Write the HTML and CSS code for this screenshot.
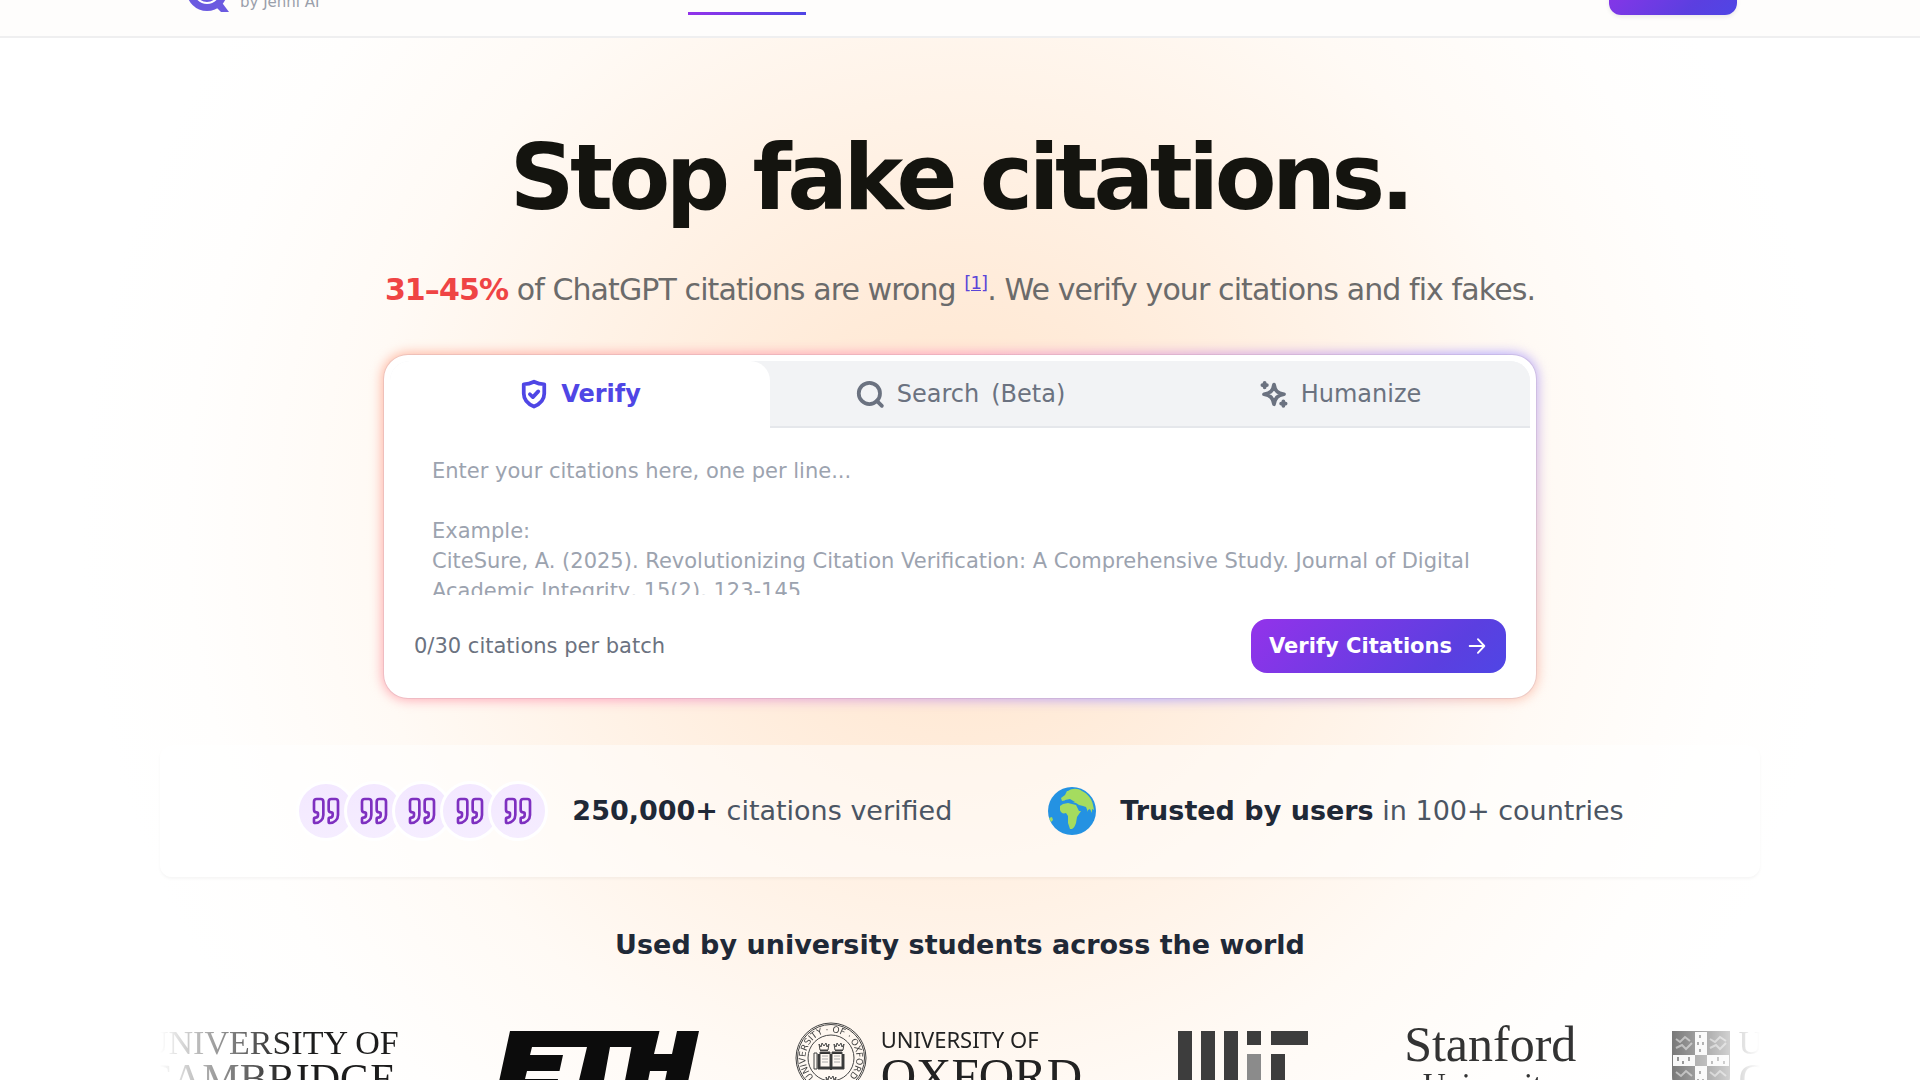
FILE: index.html
```html
<!DOCTYPE html>
<html lang="en">
<head>
<meta charset="utf-8">
<meta name="viewport" content="width=device-width, initial-scale=1">
<title>CiteSure</title>
<link rel="stylesheet" href="styles.css">
</head>
<body>
<svg class="defs" aria-hidden="true">
  <symbol id="quote" viewBox="0 0 24 24"><path d="M16 3a2 2 0 0 0-2 2v6a2 2 0 0 0 2 2 1 1 0 0 1 1 1v1a2 2 0 0 1-2 2 1 1 0 0 0-1 1v2a1 1 0 0 0 1 1 6 6 0 0 0 6-6V5a2 2 0 0 0-2-2z"/><path d="M5 3a2 2 0 0 0-2 2v6a2 2 0 0 0 2 2 1 1 0 0 1 1 1v1a2 2 0 0 1-2 2 1 1 0 0 0-1 1v2a1 1 0 0 0 1 1 6 6 0 0 0 6-6V5a2 2 0 0 0-2-2z"/></symbol>
  <symbol id="crown" viewBox="0 0 12 10"><path d="M2 9 1 3l2 3 1-4 2 3 2-3 1 4 2-3-1 6zM2 9.500h8"/></symbol>
</svg>

<header class="header">
  <div class="header-inner">
    <a class="brand" href="#">
      <svg class="brand-mark" viewBox="0 0 42 44" aria-hidden="true"><circle cx="20" cy="22.500" r="20.500" fill="#6b5ae0"/><path d="M33 32l9 12h-8l-8-8z" fill="#6b5ae0"/><circle cx="20" cy="22.500" r="12.500" fill="none" stroke="#fff" stroke-width="2"/></svg>
      <span>by Jenni AI</span>
    </a>
    <a class="nav-active" href="#" aria-label="Verify"></a>
    <button class="header-cta" type="button" aria-label="Sign up"></button>
  </div>
</header>

<main class="page">
  <section class="hero">
    <h1>Stop fake citations.</h1>
    <p class="lead"><strong>31–45%</strong> of ChatGPT citations are wrong <sup><a href="#">[1]</a></sup>. We verify your citations and fix fakes.</p>

    <div class="card">
      <div class="tabs">
        <button class="tab tab-active" type="button">
          <svg class="icon" viewBox="0 0 24 24" aria-hidden="true"><path d="M12 2.200c2.700 1.300 5.300 1.900 8.200 2v7.300c0 5-3.200 8.300-8.200 10.500-5-2.200-8.200-5.500-8.200-10.500V4.200c2.900-.1 5.500-.7 8.200-2z"/><path d="m8.700 12.200 2.400 2.300 4.300-4.600"/></svg>
          Verify
        </button>
        <button class="tab" type="button">
          <svg class="icon" viewBox="0 0 24 24" aria-hidden="true"><circle cx="11.500" cy="11.500" r="8.500"/><path d="m17.500 17.500 4 4"/></svg>
          Search <span>(Beta)</span>
        </button>
        <button class="tab" type="button">
          <svg class="icon" viewBox="0 0 24 24" aria-hidden="true"><path d="M12 4.500c.8 4.900 2.600 6.700 8 7.700-5.400 1-7.200 3-8 8-.8-5-2.600-7-8-8 5.400-1 7.200-2.800 8-7.700z"/><path d="M4.500 3v3.600M2.700 4.800h3.600M19.500 17.800v3.600M17.700 19.600h3.600"/></svg>
          Humanize
        </button>
      </div>
      <textarea class="entry" aria-label="Citations" placeholder="Enter your citations here, one per line...&#10;&#10;Example:&#10;CiteSure, A. (2025). Revolutionizing Citation Verification: A Comprehensive Study. Journal of Digital Academic Integrity, 15(2), 123-145"></textarea>
      <div class="card-foot">
        <span>0/30 citations per batch</span>
        <button class="verify" type="button">Verify Citations
          <svg viewBox="0 0 24 24" aria-hidden="true"><path d="M4 12h16M13 4.500l7 7.500-7 7.500"/></svg>
        </button>
      </div>
    </div>
  </section>

  <section class="stats">
    <div class="stat">
      <div class="quotes">
        <span><svg><use href="#quote"/></svg></span>
        <span><svg><use href="#quote"/></svg></span>
        <span><svg><use href="#quote"/></svg></span>
        <span><svg><use href="#quote"/></svg></span>
        <span><svg><use href="#quote"/></svg></span>
      </div>
      <p><strong>250,000+</strong> citations verified</p>
    </div>
    <div class="stat">
      <svg class="globe" viewBox="0 0 48 48" aria-hidden="true"><circle cx="24" cy="24" r="24" fill="#2492e2"/><path d="M20 4c4-3 10-3 14 0 6 3 10 8 11 14l1 5-2-1v4l-2-4-2 1v2l-2-5-3-1-4-1-3-2-4-1-5-2-5 1-1-3 4-3 2-4z" fill="#a5dc5f"/><path d="M15 17l5-1 8 2 3 6h2l-4 6-1 6c-1 3-2 5-4 6h-2l-2-6v-7l-2-3c-3 1-5 0-6-3l0-4z" fill="#a5dc5f"/><path d="M17 13l5-1 5 3-4 1-3-1-3 1z" fill="#2492e2"/><path d="M1 31l3-1 1 3-2 2z" fill="#a5dc5f"/></svg>
      <p><strong>Trusted by users</strong> in 100+ countries</p>
    </div>
  </section>

  <section class="schools">
    <h2>Used by university students across the world</h2>
    <div class="marquee">
      <div class="track">
        <div class="cambridge">UNIVERSITY OF<span>CAMBRIDGE</span></div>
        <svg class="eth" viewBox="-2 0 204 60" role="img" aria-label="ETH"><path fill="#0c0c0c" d="M13 0H162.500L157 23H175L180 0H202L189 60H166L170 40H153L149 60H126L134.500 16H113L105 60H79.500L90 16H35L33 24H66L62.500 40H30L28 48H61L59 60H0z"/></svg>
        <div class="oxford">
          <svg class="seal" viewBox="0 0 72 72" role="img" aria-label="Oxford seal">
            <defs><path id="ring" d="M36 36m-17 19a25.500 25.500 0 1 1 34 0"/></defs>
            <circle cx="36" cy="36" r="35"/><circle cx="36" cy="36" r="33.500"/><circle cx="36" cy="36" r="23"/>
            <text class="seal-text"><textPath href="#ring">UNIVERSITY · OF · OXFORD</textPath></text>
            <path d="M25 30h10v15H25zM37 30h10v15H37zM23 32v15h12l1 1 1-1h12V32" fill="#333"/>
            <path d="M27 34h6M27 37h6M27 40h6M39 34h6M39 37h6M39 40h6" stroke="#aaa"/>
            <path d="M19 31h3v16h-3z"/>
            <use href="#crown" x="23" y="19" width="12" height="10"/><use href="#crown" x="38" y="19" width="12" height="10"/><use href="#crown" x="30" y="52" width="12" height="10"/>
          </svg>
          <div><span class="ox-top">UNIVERSITY OF</span><span class="ox-main">OXFORD</span></div>
        </div>
        <svg class="mit" viewBox="0 0 130 60" role="img" aria-label="MIT"><path fill="#3d3d3d" d="M0 0h14v60H0zM23 0h14v50H23zM46 0h14v60H46zM69 0h14v14H69zM93 0h37v14H93zM93 23h14v37H93z"/><path fill="#8b8b8b" d="M69 23h14v37H69z"/></svg>
        <div class="stanford">Stanford<span>University</span></div>
        <div class="crest-logo">
          <svg class="crest" viewBox="0 0 58 60" role="img" aria-label="Cambridge shield"><path d="M0 0h58v45q0 12-10 15H10Q0 57 0 45z" fill="#3b3b3b"/><path d="M23 1h12v23h22v11H35v25H23V35H1V24h22z" fill="#f3f3f3"/><path d="M23 24h12v11H23z" fill="#666"/><path d="M28 4v3M26 11v3M31 11v3M28 18v3M6 26v4M11 30v3M17 26v4M40 30v3M46 26v4M52 30v3M28 40v3M26 48v3M31 48v3" stroke="#555" stroke-width="2"/><path d="M4 8l4 3 5-5 5 4M4 17l6-3 4 4 6-6M38 8l5 3 5-5 6 4M38 17l6-3 4 4 6-6M4 41l5 4 5-5 6 5M38 41l5 4 5-5 6 5" fill="none" stroke="#999" stroke-width="2"/></svg>
          <div class="cambridge">UNIVERSITY OF<span>CAMBRIDGE</span></div>
        </div>
      </div>
    </div>
  </section>
</main>
</body>
</html>
```
FILE: styles.css
```css
* { box-sizing: border-box; }
body { margin: 0; height: 100vh; overflow: hidden; background: #fff; color: #1f2937; font-family: "DejaVu Sans", sans-serif; }
button { border: 0; font: inherit; cursor: pointer; }
h1, h2, p { margin: 0; }
.defs { display: none; }

.header { height: 38px; overflow: hidden; background: #fefdfc; border-bottom: 2px solid #efeff0; }
.header-inner { max-width: 1600px; height: 100%; margin: 0 auto; padding: 0 23px 21px 24px; display: grid; grid-template: 100% / 504px 118px 1fr; align-items: end; }
.brand { display: flex; align-items: flex-end; gap: 11px; margin-bottom: 3px; padding-left: 3px; color: #9aa0ab; font-size: 15px; line-height: 20px; text-decoration: none; }
.brand-mark { width: 42px; height: 44px; }
.nav-active { height: 3px; background: linear-gradient(90deg, #9333ea, #4f46e5); }
.header-cta { justify-self: end; width: 128px; height: 50px; border-radius: 12px; background: linear-gradient(135deg, #9333ea, #5b3fe0 70%, #4f46e5); box-shadow: 0 2px 4px rgba(0, 0, 0, .08); }

.page { position: relative; z-index: 0; padding: 80px 24px 0; background: radial-gradient(ellipse 880px 880px at 50% 480px, #ffe4ca 0, #ffebd9 25%, #fff2e6 45%, #fffaf5 68%, #fffefd 88%, #fff 100%); }
.hero { max-width: 1152px; margin: 0 auto; text-align: center; }
h1 { color: #14140f; font-size: 90px; line-height: 120px; font-weight: 700; letter-spacing: -0.05em; }
.lead { margin-top: 31px; color: #6b6b6b; font-size: 30px; line-height: 42px; white-space: nowrap; letter-spacing: -0.03em; }
.lead strong { color: #ef4444; }
.lead sup { font-size: 18px; line-height: 0; }
.lead a { color: #5b45d8; }

.card { position: relative; margin-top: 44px; padding: 6px; border-radius: 24px; background: #fff; box-shadow: 0 0 0 1px rgba(120, 80, 120, .12); text-align: left; }
.card::before { content: ""; position: absolute; inset: -2px; z-index: -1; border-radius: 26px; background: linear-gradient(135deg, #ffb59c, #ffa3c0 38%, #b3a8ff 74%, #ffc4ac); filter: blur(6px); }
.tabs { display: grid; grid-template-columns: 380px 1fr 1fr; height: 67px; border-radius: 20px 20px 0 0; background: #f2f3f5; overflow: hidden; }
.tab { display: flex; align-items: center; justify-content: center; gap: 12px; padding: 0; border-bottom: 2px solid #e5e7eb; background: #f2f3f5; color: #6b7280; font-size: 24px; }
.tab-active { border-color: #fff; border-radius: 0 20px 0 0; background: #fff; color: #4f46e5; font-weight: 700; }
.icon { width: 30px; height: 30px; fill: none; stroke: currentColor; stroke-width: 3; stroke-linecap: round; stroke-linejoin: round; }
.entry { display: block; width: 100%; height: 167px; border: 0; padding: 28px 42px 0; background: none; font: 21px/30px "DejaVu Sans", sans-serif; resize: none; overflow: hidden; outline: 0; }
.entry::placeholder { color: #9ca3af; opacity: 1; }
.card-foot { display: flex; align-items: center; justify-content: space-between; padding: 24px 24px 19px; color: #6b7280; font-size: 21px; }
.verify { display: flex; align-items: center; gap: 14px; height: 54px; padding: 0 18px; border-radius: 16px; background: linear-gradient(135deg, #9333ea, #5b3fe0 75%, #4f46e5); color: #fff; font-weight: 700; }
.verify svg { width: 22px; height: 22px; fill: none; stroke: #fff; stroke-width: 2; stroke-linecap: round; stroke-linejoin: round; }

.stats { max-width: 1600px; height: 132px; margin: 47px auto 0; display: flex; align-items: center; justify-content: center; gap: 96px; border-radius: 12px; background: rgba(255, 255, 255, .5); box-shadow: 0 2px 3px rgba(0, 0, 0, .04); color: #4b5563; font-size: 27px; line-height: 36px; }
.stats strong { color: #1f2937; }
.stat { display: flex; align-items: center; gap: 24px; }
.quotes { display: flex; }
.quotes span { display: grid; place-items: center; width: 60px; height: 60px; border: 3px solid #fff; border-radius: 50%; background: linear-gradient(#f3e8ff, #f5edff); }
.quotes span + span { margin-left: -12px; }
.quotes svg { width: 36px; height: 32px; fill: none; stroke: #7e30c0; stroke-width: 2; stroke-linecap: round; stroke-linejoin: round; }
.globe { width: 48px; height: 48px; }

.schools { max-width: 1600px; margin: 48px auto 0; }
h2 { font-size: 27px; line-height: 40px; font-weight: 700; text-align: center; }
.marquee { padding-top: 57px; overflow: hidden; white-space: nowrap; -webkit-mask-image: linear-gradient(90deg, transparent, #000 8%, #000 92%, transparent); mask-image: linear-gradient(90deg, transparent, #000 8%, #000 92%, transparent); }
.track { display: flex; align-items: flex-start; gap: 96px; height: 100px; margin-left: -16px; }
.track > * { flex: none; }
.cambridge { color: #1c1c1c; font: 34px/42px "Liberation Serif", serif; }
.cambridge span { display: block; font-size: 42px; line-height: 30px; }
.eth, .mit, .crest { height: 60px; margin-top: 9px; }
.eth { width: 204px; }
.mit { width: 130px; }
.crest { width: 58px; }
.oxford { display: flex; gap: 14px; color: #222; }
.seal { width: 72px; height: 72px; fill: none; stroke: #444; }
.seal-text { fill: #444; stroke: none; font: 9px "DejaVu Sans", sans-serif; }
.ox-top, .ox-main { display: block; }
.ox-top { font: 22px/34px "Noto Sans", sans-serif; }
.ox-main { font: 49px/40px "Liberation Serif", serif; }
.stanford { color: #333; font: 50px/44px "Liberation Serif", serif; text-align: center; }
.stanford span { display: block; font-size: 32px; line-height: 36px; }
.crest-logo { display: flex; gap: 8px; }
```
